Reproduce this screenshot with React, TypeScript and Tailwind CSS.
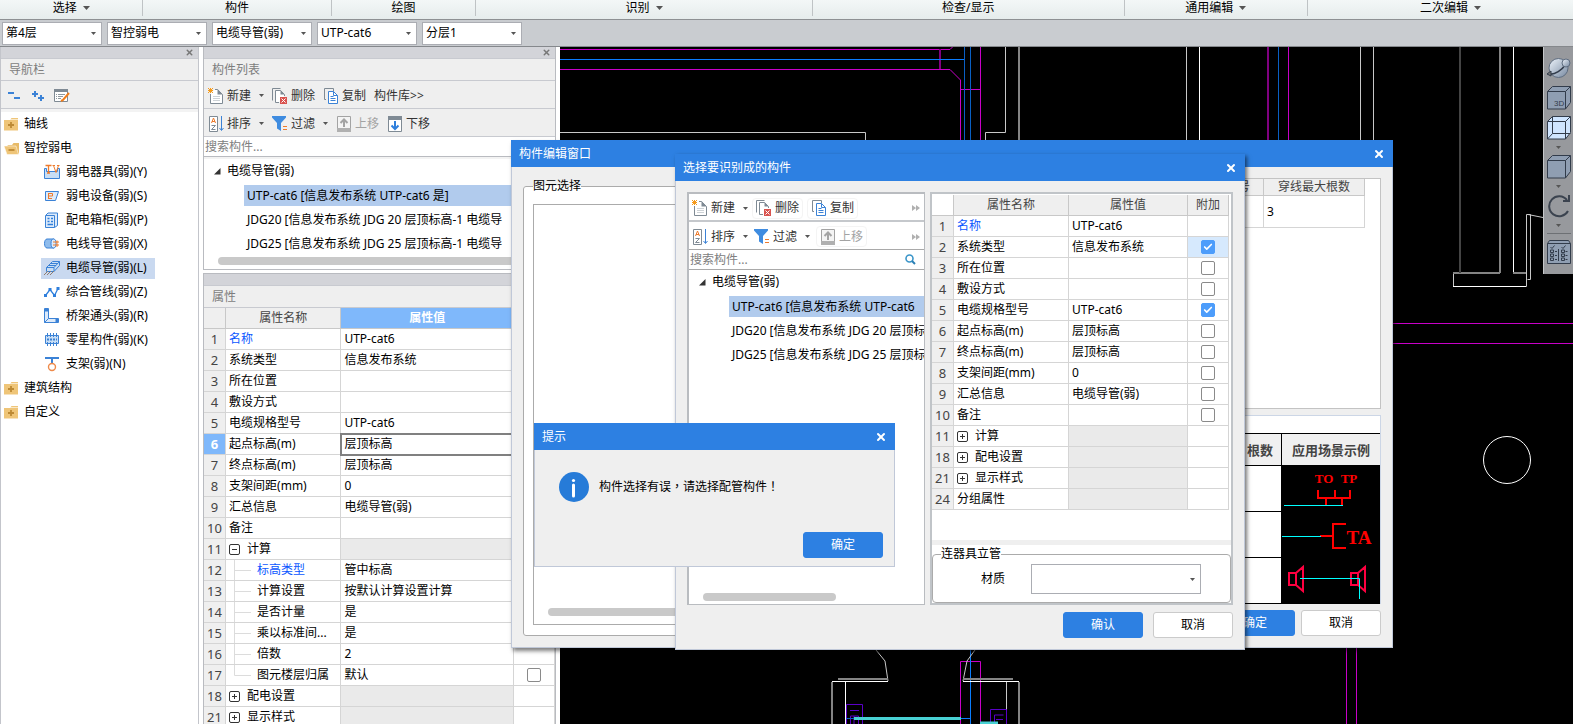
import type { ReactNode } from 'react';
import { Check, X } from 'lucide-react';
import { clsx } from 'clsx';

interface PropertyRow {
  no: number;
  name: string;
  value?: string;
  link?: boolean;
  group?: 'open' | 'closed';
  child?: boolean;
  last?: boolean;
  shaded?: boolean;
  checked?: boolean;
}

const ribbonGroups = [
  { label: '选择', menu: true, width: 'flex-[143]' },
  { label: '构件', menu: false, width: 'flex-[188]' },
  { label: '绘图', menu: false, width: 'flex-[144]' },
  { label: '识别', menu: true, width: 'flex-[337]' },
  { label: '检查/显示', menu: false, width: 'flex-[312]' },
  { label: '通用编辑', menu: true, width: 'flex-[183]' },
  { label: '二次编辑', menu: true, width: 'flex-[246] pl-5' },
];

const selectors = [
  { label: '楼层', value: '第4层' },
  { label: '专业', value: '智控弱电' },
  { label: '构件类型', value: '电缆导管(弱)' },
  { label: '构件', value: 'UTP-cat6' },
  { label: '分层', value: '分层1' },
];

const baseRows: PropertyRow[] = [
  { no: 1, name: '名称', value: 'UTP-cat6', link: true },
  { no: 2, name: '系统类型', value: '信息发布系统', checked: true },
  { no: 3, name: '所在位置', checked: false },
  { no: 4, name: '敷设方式', checked: false },
  { no: 5, name: '电缆规格型号', value: 'UTP-cat6', checked: true },
  { no: 6, name: '起点标高(m)', value: '层顶标高', checked: false },
  { no: 7, name: '终点标高(m)', value: '层顶标高', checked: false },
  { no: 8, name: '支架间距(mm)', value: '0', checked: false },
  { no: 9, name: '汇总信息', value: '电缆导管(弱)', checked: false },
  { no: 10, name: '备注', checked: false },
];

const panelRows: PropertyRow[] = [
  ...baseRows.map((row) => ({ ...row, checked: undefined })),
  { no: 11, name: '计算', group: 'open', shaded: true },
  { no: 12, name: '标高类型', value: '管中标高', link: true, child: true },
  { no: 13, name: '计算设置', value: '按默认计算设置计算', child: true },
  { no: 14, name: '是否计量', value: '是', child: true },
  { no: 15, name: '乘以标准间...', value: '是', child: true },
  { no: 16, name: '倍数', value: '2', child: true },
  { no: 17, name: '图元楼层归属', value: '默认', child: true, last: true, checked: false },
  { no: 18, name: '配电设置', group: 'closed', shaded: true },
  { no: 21, name: '显示样式', group: 'closed', shaded: true },
];

const dialogRows: PropertyRow[] = [
  ...baseRows,
  { no: 11, name: '计算', group: 'closed', shaded: true },
  { no: 18, name: '配电设置', group: 'closed', shaded: true },
  { no: 21, name: '显示样式', group: 'closed', shaded: true },
  { no: 24, name: '分组属性', shaded: true },
];

/* ---------- icons ---------- */

function Caret({ className = '' }: { className?: string }) {
  return (
    <svg width="5" height="3" viewBox="0 0 5 3" className={clsx('shrink-0', className)} aria-hidden="true">
      <path d="M0 0h5L2.500 3z" fill="#555" />
    </svg>
  );
}

function Icon({ children }: { children: ReactNode }) {
  return (
    <svg width="16" height="16" viewBox="0 0 16 16" fill="none" className="shrink-0" aria-hidden="true">
      {children}
    </svg>
  );
}

const NewIcon = () => (
  <Icon>
    <path d="M2.500 6v9.500h12V6.500l-5-5H7" stroke="#7f8a94" fill="#fff" />
    <path d="M9.500 1v5.500h5z" fill="#7f8a94" />
    <path d="M5 8.500h7M5 10.500h7M5 12.500h7" stroke="#cdd2d6" />
    <path d="M0 0l5 5M5 0L0 5M2.500 0v5M0 2.500h5" stroke="#f59a1b" />
  </Icon>
);

const DeleteIcon = () => (
  <Icon>
    <path d="M.5 12.500V.5h8" stroke="#7f8a94" />
    <path d="M7 14.500H3.500v-12h5l4 4V8" stroke="#7f8a94" fill="#fff" />
    <path d="M8.500 2v4.500h4z" fill="#7f8a94" />
    <rect x="8" y="9" width="7" height="7" fill="#d9534f" />
    <path d="M9.500 10.500l4 4M13.500 10.500l-4 4" stroke="#fff" />
  </Icon>
);

const CopyIcon = () => (
  <Icon>
    <path d="M3 11.500H1.500V.5h9V3" stroke="#7f8a94" />
    <path d="M5.500 3.500h5l4 4v8h-9z" stroke="#3b82d6" fill="#fff" />
    <path d="M10.500 3.500v4h4M7.500 8.500h3M7.500 10.500h5M7.500 12.500h5" stroke="#3b82d6" />
  </Icon>
);

const SortIcon = () => (
  <Icon>
    <path d="M1.500.5h8v15h-8z" stroke="#7f8a94" fill="#fff" />
    <path d="M3.500 7l2-5 2 5M4 5.500h3" stroke="#ee7a2b" />
    <path d="M3.500 9.500h4l-4 4h4" stroke="#7f8a94" />
    <path d="M13.500 0v14M11.500 12l2 2.500 2-2.500" stroke="#3b82d6" />
  </Icon>
);

const FilterIcon = () => (
  <Icon>
    <path d="M0 0h14v1.500L9 7v8l-4-2.500V7L0 1.500z" fill="#3f8ce0" />
    <path d="M11 10.500h4M11 13.500h4" stroke="#ee7a2b" />
  </Icon>
);

const UpIcon = () => (
  <Icon>
    <path d="M1.500.5v14h13V.5z" stroke="#a3a3a3" fill="#f4f4f4" />
    <path d="M1 12h14v4H1z" fill="#b0b0b0" />
    <path d="M8 11V4M4.500 7L8 3.500 11.500 7" stroke="#a3a3a3" strokeWidth="2" />
  </Icon>
);

const DownIcon = () => (
  <Icon>
    <path d="M1.500 1v14.500h13V1z" stroke="#7f8a94" fill="#fff" />
    <path d="M1 0h14v4H1z" fill="#7f8a94" />
    <path d="M8 5v8M4.500 9.500L8 13l3.500-3.500" stroke="#2f7fdc" strokeWidth="2" />
  </Icon>
);

const SearchIcon = () => (
  <svg width="11" height="11" viewBox="0 0 11 11" fill="none" className="shrink-0" aria-hidden="true">
    <circle cx="4.500" cy="4.500" r="3.500" stroke="#3a95c9" strokeWidth="1.600" />
    <path d="M7 7l3 3" stroke="#2b80b5" strokeWidth="2" />
  </svg>
);

const FolderClosed = () => (
  <Icon>
    <path d="M0 4h14v10.500H0z" fill="#efc578" />
    <path d="M7.500 2h6.500v2H6z" fill="#efc578" />
    <path d="M6 3.500h8" stroke="#fff" strokeWidth=".6" />
    <path d="M4 9h6M7 6v6" stroke="#bd8a35" strokeWidth="1.800" />
  </Icon>
);

const FolderOpen = () => (
  <Icon>
    <path d="M3 5h5l1.500-2H15v11" fill="#e8bb68" />
    <path d="M0 6h12l2.500 8.500H3z" fill="#efc578" stroke="#fff" strokeWidth=".5" />
    <path d="M4.500 10h6" stroke="#bd8a35" strokeWidth="1.800" />
  </Icon>
);

const FixtureIcon = () => (
  <Icon>
    <path d="M.5 4.500h2v3h11v-3h2v10H.5z" fill="#c8def5" stroke="#3b82d6" />
    <path d="M1.500 1.500h6M4.500 1.500v8M3 9h3" stroke="#ee7a2b" strokeWidth="1.300" />
    <path d="M8.500 1.500H11M13 1.500h2.500M9.500 1.500l2.500 7 2.500-7" stroke="#ee7a2b" />
  </Icon>
);

const DeviceIcon = () => (
  <Icon>
    <path d="M1.500 3.500h13l-3 9h-10z" fill="#dceafa" stroke="#3b82d6" />
    <path d="M4 5.500h4.500M4 8h4.500M4 10.500h4M4.500 5.500v5M8.500 5.500v2.500" stroke="#ee7a2b" />
  </Icon>
);

const CabinetIcon = () => (
  <Icon>
    <path d="M1.500 3.500h9v12h-9zM2 3l2-2h9.500v12.500l-3 2" fill="#dceafa" stroke="#3b82d6" />
    <path d="M3.500 6.500h2M7 6.500h2M3.500 9.500h2M7 9.500h2M3.500 12.500h5.500" stroke="#2f7fdc" strokeWidth="1.500" />
  </Icon>
);

const ConduitIcon = () => (
  <Icon>
    <path d="M3 3h7v9H3C1.500 12 .5 10 .5 7.500S1.500 3 3 3z" fill="#8fbcec" stroke="#3b82d6" />
    <ellipse cx="9.500" cy="7.500" rx="2.500" ry="4.500" fill="#dceafa" stroke="#3b82d6" />
    <path d="M9 6h6M9 9h6M13 4.500v3M13 7.500V11" stroke="#ee7a2b" />
  </Icon>
);

const CableIcon = () => (
  <Icon>
    <path d="M2.500 7.500l6-6h7v4l-5.500 6h-7.500z" fill="#c8def5" stroke="#3b82d6" />
    <path d="M2.500 7.500H10l5.500-6M10 7.500v4M4.500 5.500H12M6.500 3.500H14" stroke="#3b82d6" />
    <path d="M4 11l-4 4M7 11l-4 4M10 11l-4 4" stroke="#8f7d70" />
  </Icon>
);

const PipelineIcon = () => (
  <Icon>
    <path d="M1.500 11.500l4.500-6 4.500 6L14 4.500" stroke="#2f7fdc" strokeWidth="1.300" />
    <path d="M0 10h3v3H0zM4.500 4h3v3h-3zM9 10h3v3H9zM12.500 3h3v3h-3z" fill="#2f7fdc" />
  </Icon>
);

const BendIcon = () => (
  <Icon>
    <path d="M.5.5h4v10h10v4H.5z" fill="#dceafa" stroke="#3b82d6" />
    <path d="M1 1h3v2.500H1zM11.500 11H14v3h-2.500z" fill="#3b82d6" />
    <path d="M.5 14.500l4-4" stroke="#3b82d6" />
  </Icon>
);

const ChipIcon = () => (
  <Icon>
    <path d="M1.500 3.500h13v8h-13z" fill="#c8def5" stroke="#3b82d6" />
    <path d="M3.500 1v4M6.500 1v4M9.500 1v4M12.500 1v4M3.500 10v4M6.500 10v4M9.500 10v4M12.500 10v4" stroke="#3b82d6" />
    <path d="M3 7.500h10" stroke="#3b82d6" strokeWidth="2" strokeDasharray="2 1" />
  </Icon>
);

const BracketIcon = () => (
  <Icon>
    <path d="M1 2h14M8 2v5" stroke="#3b82d6" strokeWidth="2" />
    <circle cx="8" cy="11" r="3.500" stroke="#ee8a4a" strokeWidth="1.400" />
  </Icon>
);

const navItems = [
  { label: '弱电器具(弱)(Y)', icon: <FixtureIcon /> },
  { label: '弱电设备(弱)(S)', icon: <DeviceIcon /> },
  { label: '配电箱柜(弱)(P)', icon: <CabinetIcon /> },
  { label: '电线导管(弱)(X)', icon: <ConduitIcon /> },
  { label: '电缆导管(弱)(L)', icon: <CableIcon />, active: true },
  { label: '综合管线(弱)(Z)', icon: <PipelineIcon /> },
  { label: '桥架通头(弱)(R)', icon: <BendIcon /> },
  { label: '零星构件(弱)(K)', icon: <ChipIcon /> },
  { label: '支架(弱)(N)', icon: <BracketIcon /> },
];

/* ---------- shared pieces ---------- */

function Combo({ label, value, className }: { label: string; value: string; className: string }) {
  return (
    <span className={clsx('grid items-center border border-[#abadb3] bg-white', className)}>
      <select aria-label={label} defaultValue={value} className="col-start-1 row-start-1 h-full w-full appearance-none bg-transparent pl-[3px] outline-none">
        <option>{value}</option>
      </select>
      <Caret className="pointer-events-none col-start-1 row-start-1 mr-[5px] justify-self-end" />
    </span>
  );
}

interface ToolButtonProps {
  icon?: ReactNode;
  label: string;
  menu?: boolean;
  disabled?: boolean;
  framed?: boolean;
}

function ToolButton({ icon, label, menu, disabled, framed }: ToolButtonProps) {
  return (
    <button
      type="button"
      disabled={disabled}
      className={clsx(
        'flex h-[21px] shrink-0 items-center gap-[3px] whitespace-nowrap',
        disabled ? 'text-[#a3a3a3]' : 'text-[#333]',
        framed && 'rounded border border-[#f4f4f4] px-[3px]',
      )}
    >
      {icon}
      {label}
      {menu && <Caret className="ml-[5px]" />}
    </button>
  );
}

function CheckBox({ label, checked = false }: { label: string; checked?: boolean }) {
  return (
    <span className="grid h-5 place-items-center">
      <input
        type="checkbox"
        aria-label={label}
        defaultChecked={checked}
        className="peer col-start-1 row-start-1 size-[14px] appearance-none rounded-[2px] border border-[#8a8a8a] bg-white checked:border-[#4d9dfb] checked:bg-[#4d9dfb]"
      />
      <Check size={10} strokeWidth={4} className="pointer-events-none invisible col-start-1 row-start-1 text-white peer-checked:visible" />
    </span>
  );
}

function Expander({ open }: { open: boolean }) {
  return (
    <button type="button" aria-label={open ? '折叠' : '展开'} className="mr-[7px] size-[11px] shrink-0">
      <svg width="11" height="11" viewBox="0 0 11 11" fill="none" stroke="#333">
        <rect x=".5" y=".5" width="10" height="10" rx="1.500" />
        <path d={open ? 'M3 5.500h5' : 'M3 5.500h5M5.500 3v5'} />
      </svg>
    </button>
  );
}

interface PropertyTableProps {
  rows: PropertyRow[];
  valueCol: string;
  extra?: string;
  selected?: number;
  highlight?: number;
}

function PropertyTable({ rows, valueCol, extra, selected, highlight }: PropertyTableProps) {
  const head = 'h-[21px] border-r border-b border-[#c8c8c8] p-0 font-normal';
  const cell = 'h-[21px] border-r border-b border-[#d5d5d5] p-0';
  return (
    <table className="table-fixed border-separate border-spacing-0 whitespace-nowrap text-black">
      <colgroup>
        <col className="w-[22px]" />
        <col className="w-[115px]" />
        <col className={valueCol} />
        <col className="w-[41px]" />
      </colgroup>
      <thead>
        <tr className="text-[#444]">
          <th className={clsx(head, selected ? 'bg-[#efefef]' : 'bg-white')} />
          <th className={clsx(head, 'bg-[#efefef]')}>属性名称</th>
          <th className={clsx(head, selected ? 'bg-[#7fb8fb] font-semibold text-white' : 'bg-[#efefef]')}>属性值</th>
          <th className={clsx(head, 'bg-[#efefef]')}>{extra}</th>
        </tr>
      </thead>
      <tbody>
        {rows.map((row) => (
          <tr key={row.no}>
            <td
              className={clsx(
                cell,
                'border-[#c8c8c8] text-center text-[13px]',
                row.no === selected ? 'bg-[#7fb8fb] font-bold text-white' : 'bg-[#efefef] text-[#444]',
              )}
            >
              {row.no}
            </td>
            <td className={clsx(cell, 'bg-white')}>
              <div className={clsx('flex h-5 items-center pl-[3px]', row.link && 'text-[#0b57ff]')}>
                {row.group && <Expander open={row.group === 'open'} />}
                {row.child && (
                  <svg width="28" height="20" viewBox="0 0 28 20" fill="none" stroke="#dcdcdc" className="shrink-0" aria-hidden="true">
                    <path d={row.last ? 'M5.500 0v10.500H22' : 'M5.500 0v20M5.500 10.500H22'} />
                  </svg>
                )}
                {row.name}
              </div>
            </td>
            <td
              className={clsx(
                cell,
                'pl-[3px]',
                row.shaded ? 'bg-[#eaeaea]' : 'bg-white',
                row.no === selected && 'outline-2 -outline-offset-1 outline-[#808080]',
              )}
            >
              {row.value}
            </td>
            <td className={clsx(cell, row.no === highlight ? 'bg-[#d6e9fd]' : 'bg-white')}>
              {row.checked !== undefined && <CheckBox label={row.name} checked={row.checked} />}
            </td>
          </tr>
        ))}
      </tbody>
    </table>
  );
}

function ComponentTree({ items }: { items: string[] }) {
  return (
    <ul className="text-black">
      <li>
        <div className="flex h-6 items-center">
          <svg width="7" height="7" viewBox="0 0 7 7" className="mr-[6px] ml-[10px] shrink-0" aria-hidden="true">
            <path d="M6.500 0v6.500H0z" fill="#333" />
          </svg>
          电缆导管(弱)
        </div>
        <ul>
          {items.map((item, i) => (
            <li key={item} className="flex h-6 items-center pl-10">
              <span className={clsx('h-[21px] flex-1 overflow-hidden pl-[3px] leading-[21px] whitespace-nowrap', i === 0 && 'bg-[#b1cbed]')}>
                {item}
              </span>
            </li>
          ))}
        </ul>
      </li>
    </ul>
  );
}

function DockGrip({ closable }: { closable?: boolean }) {
  return (
    <div className="flex h-[11px] shrink-0 items-center justify-end bg-[#d3d4d9] pr-1 text-[#777]">
      {closable && (
        <button type="button" aria-label="关闭">
          <X size={9} strokeWidth={4} />
        </button>
      )}
    </div>
  );
}

function DockTitle({ children }: { children: ReactNode }) {
  return <h2 className="h-[23px] shrink-0 border-y border-[#c8cad0] bg-[#efefef] pl-2 leading-[21px] text-[#7d7d7d]">{children}</h2>;
}

function TitleBar({ children }: { children: ReactNode }) {
  return (
    <div className="flex h-[27px] shrink-0 items-center justify-between bg-[#2d80e2] px-2 text-white">
      <h2>{children}</h2>
      <button type="button" aria-label="关闭">
        <X size={12} strokeWidth={4} />
      </button>
    </div>
  );
}

function PushButton({ primary, children }: { primary?: boolean; children: ReactNode }) {
  return (
    <button
      type="button"
      className={clsx(
        'h-[26px] w-20 rounded-[3px] border',
        primary ? 'border-[#2d80e2] bg-[#2d80e2] text-white' : 'border-[#cbcbcb] bg-white text-black',
      )}
    >
      {children}
    </button>
  );
}

/* ---------- main window ---------- */

function Ribbon() {
  return (
    <header className="flex h-5 shrink-0 border-b border-[#8d9093] bg-linear-to-b from-[#f3f7f7] to-[#e6ecec]">
      {ribbonGroups.map((group) => (
        <div key={group.label} className={clsx('flex h-4 justify-center border-r border-[#bfc3c5] last:border-r-0', group.width)}>
          <button type="button" className="flex h-4 items-center gap-[6px] text-black">
            {group.label}
            {group.menu && (
              <svg width="7" height="4" viewBox="0 0 7 4" aria-hidden="true">
                <path d="M0 0h7L3.500 4z" fill="#555" />
              </svg>
            )}
          </button>
        </div>
      ))}
    </header>
  );
}

function NavigationPanel() {
  return (
    <nav className="flex w-[199px] shrink-0 flex-col border-x border-[#c3c5cb] bg-white">
      <DockGrip closable />
      <DockTitle>导航栏</DockTitle>
      <div className="flex h-7 shrink-0 items-center gap-3 border-b border-[#c8cad0] bg-[#efefef] pt-[2px] pl-[7px]">
        <button type="button" aria-label="全部折叠">
          <svg width="12" height="12" viewBox="0 0 12 12" stroke="#3b82d6" strokeWidth="2">
            <path d="M0 3h6M6 8h6" />
          </svg>
        </button>
        <button type="button" aria-label="全部展开">
          <svg width="12" height="12" viewBox="0 0 12 12" stroke="#3b82d6" strokeWidth="2">
            <path d="M0 4h6M3 1v6M6 8h6M9 5v6" />
          </svg>
        </button>
        <button type="button" aria-label="编辑" className="-ml-[2px]">
          <Icon>
            <path d="M.5 2.500h13v11H.5z" fill="#fff" stroke="#7f8a94" />
            <path d="M0 1h14v3H0z" fill="#7f8a94" />
            <path d="M2 6.500h1M4 6.500h7M2 8.500h1M4 8.500h5M2 10.500h1M4 10.500h3" stroke="#8e989f" />
            <path d="M15 5l-6 7-2 1" stroke="#f07d1a" strokeWidth="2" />
          </Icon>
        </button>
      </div>
      <ul className="border-t-3 border-[#f3f3f3] text-black">
        <li className="flex h-6 items-center gap-1 pl-[3px]"><FolderClosed />轴线</li>
        <li className="flex h-6 items-center gap-1 pl-[3px]"><FolderOpen />智控弱电</li>
        {navItems.map((item) => (
          <li key={item.label} className="flex h-6 items-center pl-10">
            <a href="#" className={clsx('flex h-[21px] items-center gap-[6px] pr-[8px] pl-[3px]', item.active && 'bg-[#c9d9f0]')}>
              {item.icon}
              {item.label}
            </a>
          </li>
        ))}
        <li className="flex h-6 items-center gap-1 pl-[3px]"><FolderClosed />建筑结构</li>
        <li className="flex h-6 items-center gap-1 pl-[3px]"><FolderClosed />自定义</li>
      </ul>
    </nav>
  );
}

function ComponentPanel() {
  return (
    <aside className="ml-1 flex w-[353px] shrink-0 flex-col">
      <section className="flex h-[223px] shrink-0 flex-col border-x border-b border-[#b9bbc0] bg-white">
        <DockGrip closable />
        <DockTitle>构件列表</DockTitle>
        <div className="flex h-7 shrink-0 items-center gap-2 border-b border-[#c8cad0] bg-[#efefef] pt-[2px] pl-1">
          <ToolButton icon={<NewIcon />} label="新建" menu />
          <ToolButton icon={<DeleteIcon />} label="删除" />
          <ToolButton icon={<CopyIcon />} label="复制" />
          <ToolButton label="构件库>>" />
        </div>
        <div className="flex h-7 shrink-0 items-center gap-2 border-b border-[#c8cad0] bg-[#efefef] pt-[2px] pl-1">
          <ToolButton icon={<SortIcon />} label="排序" menu />
          <ToolButton icon={<FilterIcon />} label="过滤" menu />
          <ToolButton icon={<UpIcon />} label="上移" disabled />
          <ToolButton icon={<DownIcon />} label="下移" />
        </div>
        <input
          type="search"
          aria-label="搜索构件"
          placeholder="搜索构件..."
          className="h-5 shrink-0 border-b border-[#b9bbc0] px-px outline-none placeholder:text-[#808080]"
        />
        <div className="flex-1 overflow-hidden border-t-2 border-[#f3f3f3]">
          <ComponentTree
            items={['UTP-cat6 [信息发布系统 UTP-cat6 是]', 'JDG20 [信息发布系统 JDG 20 层顶标高-1 电缆导', 'JDG25 [信息发布系统 JDG 25 层顶标高-1 电缆导']}
          />
          <div className="mt-[2px] ml-[14px] h-2 w-[310px] rounded-full bg-[#c9c9c9]" />
        </div>
      </section>
      <section className="mt-[3px] flex min-h-0 flex-1 flex-col overflow-hidden border-x border-t border-[#b9bbc0] bg-white">
        <DockGrip />
        <DockTitle>属性</DockTitle>
        <PropertyTable rows={panelRows} valueCol="w-[172px]" selected={6} />
      </section>
    </aside>
  );
}

function Cube({ face = '#8f9eb2', children }: { face?: string; children?: ReactNode }) {
  return (
    <svg width="24" height="24" viewBox="0 0 24 24" fill={face} stroke="#323c4b" strokeLinejoin="round">
      <path d="M.5 5.500l5-5h18v16l-5 6.500H.5z" />
      <path d="M.5 5.500h18l5-5M18.500 5.500V23" fill="none" />
      {children}
    </svg>
  );
}

function ViewToolbar() {
  return (
    <div className="absolute top-0 right-0 flex w-[30px] flex-col items-center gap-[6px] border-l border-[#c6c8ca] bg-[#97999d] pt-[9px] pb-[10px]">
      <button type="button" aria-label="动态观察">
        <svg width="24" height="24" viewBox="0 0 24 24">
          <defs>
            <linearGradient id="ball" x1="0" y1="0" x2="1" y2="1">
              <stop offset="0" stopColor="#eef4fb" />
              <stop offset="1" stopColor="#7688a0" />
            </linearGradient>
          </defs>
          <circle cx="11.500" cy="12" r="9.500" fill="url(#ball)" stroke="#5f6d80" />
          <path d="M2 18c6 1 13-4 17-10" fill="none" stroke="#323c4b" strokeWidth="1.500" />
          <circle cx="19" cy="7" r="4" fill="url(#ball)" stroke="#5f6d80" />
          <path d="M0 18l4-3v5z" fill="#777" stroke="#323c4b" />
        </svg>
      </button>
      <button type="button" aria-label="三维">
        <Cube>
          <text x="7" y="20" fontSize="8" fontFamily="Liberation Sans" fill="#323c4b" stroke="none">3D</text>
        </Cube>
      </button>
      <button type="button" aria-label="线框">
        <Cube face="#cfe5ff">
          <path d="M5.500.5v17h18M.5 23l5-5.500" fill="none" />
        </Cube>
      </button>
      <Caret />
      <button type="button" aria-label="实体">
        <Cube />
      </button>
      <Caret />
      <button type="button" aria-label="旋转">
        <svg width="24" height="24" viewBox="0 0 24 24" fill="none" stroke="#3b434f" strokeWidth="2">
          <path d="M21 17a10 10 0 1 1-1-11" />
          <path d="M22 1v6h-6" />
        </svg>
      </button>
      <Caret />
      <hr className="w-6 border-[#6d7074]" />
      <button type="button" aria-label="显示设置">
        <svg width="24" height="24" viewBox="0 0 24 24" fill="#8f9eb2" stroke="#323c4b">
          <path d="M.5 3.500l2-3h19l2 3v20H.5zM.5 3.500h23" />
          <path d="M11.500 9v12M3.500 7l1.500 1.500L7.500 5.500M14.500 7l1.500 1.500 2.500-3" fill="none" />
          <path d="M3.500 10h3v2.500h-3zM3.500 14h3v2.500h-3zM3.500 18h3v2.500h-3zM14.500 10h3v2.500h-3zM14.500 14h3v2.500h-3zM14.500 18h3v2.500h-3zM8 11.500h2M8 15.500h2M8 19.500h2M18.500 11.500h2M18.500 15.500h2M18.500 19.500h2" fill="none" />
        </svg>
      </button>
    </div>
  );
}

function DrawingCanvas() {
  return (
    <main className="relative ml-1 min-w-0 flex-1 overflow-hidden bg-black">
      <svg className="block h-full w-full" fill="none" aria-label="图纸">
        <g transform="translate(-560 -47)">
          <g stroke="#c800c8">
            <path d="M560 49.500H950l3-3M560 69.500H950L960.500 80V140M960 89.500h20M980.500 47v93M1288.500 47v93" />
            <path d="M1393 323.500h180M1393 343.500h180M1346.500 648v76M1356.500 648v76" />
            <path d="M960.500 724v-62.500h20V724" />
            <path d="M940 49v20M1268 47v93" stroke="#800080" strokeWidth="2" />
          </g>
          <g stroke="#0a7cff">
            <path d="M560 59.500h404M970.500 648v76M961 718.500h10" />
            <path d="M964.500 47v93M970.500 47v93M1278.500 47v93" stroke="#0a5fc4" />
          </g>
          <g stroke="#c8c8c8">
            <path d="M560 132.500h305.500v7.500M1005.500 47v85.500H985.500V140M1186.500 47v93M1360.500 47v93M1373.500 47v93" />
            <path d="M1453.500 273v13.500h73V214.500h4v65h-3M1528 214.500l15 3" />
            <path d="M876 650l9 11 3 20M975 650l-8 11-4 20" />
            <path d="M1006.500 682v42" />
          </g>
          <g stroke="#ffffff">
            <path d="M1199.500 47v93M1513.500 47v226M1453 286.500h73M832 681.500h56M845.500 681v43M963 681.500h56" />
            <circle cx="1507" cy="460" r="23.500" />
          </g>
          <g stroke="#848484" strokeWidth="2">
            <path d="M1019 47v93M1500 47v226M1453 273h47M1513 273h13M838 679h50M832 682v42M963 679h50M1019 682v42" />
            <path d="M1460 47v226" stroke="#444" />
          </g>
          <g stroke="#5a00c8">
            <path d="M846.500 724v-19.500h16V724M850 710.500h9M850.500 724v-8h8v8M854 716v8" />
            <path d="M990.500 724v-14.500h16V724M994.500 722v-7h9M996 719.500h7" />
          </g>
          <path d="M846 718.500h8" stroke="#0a5fc4" />
          <path d="M854 718.500h107M980 723h18" stroke="#48d1d4" strokeWidth="3" />
        </g>
      </svg>
      <ViewToolbar />
    </main>
  );
}

/* ---------- dialogs ---------- */

function ScenarioDrawing() {
  return (
    <svg width="99" height="138" viewBox="0 0 99 138" fill="none" className="block bg-black" aria-label="应用场景">
      <g fill="#f00" fontFamily="Liberation Serif" fontWeight="bold" textAnchor="middle">
        <text x="43" y="17" fontSize="13">TO</text>
        <text x="68" y="17" fontSize="13">TP</text>
        <text x="78" y="78" fontSize="19">TA</text>
      </g>
      <path d="M37 24v8h32v-8M54 24v8M45 32v7M61 32v7M39 70h13M65 58H52v24h13" stroke="#f00" strokeWidth="2" />
      <path d="M8 107h7v12H8zM15 107l7-6v24l-7-6M70 107h7v12h-7zM77 107l7-6v24l-7-6" stroke="#ff0040" strokeWidth="2" />
      <path d="M3 39.500h59M1 70.500h39M19 112.500h59.500V133" stroke="#0ff" />
    </svg>
  );
}

function EditWindow() {
  return (
    <section role="dialog" aria-label="构件编辑窗口" className="absolute top-[140px] left-[511px] flex h-[508px] w-[882px] flex-col bg-[#efefef] shadow-[2px_3px_4px_rgba(0,0,0,0.5)]">
      <TitleBar>构件编辑窗口</TitleBar>
      <div className="flex min-h-0 flex-1 gap-3 border border-t-0 border-[#c0c8d8] px-[11px] pt-[11px] pb-[11px]">
        <fieldset className="w-[360px] rounded-[3px] border border-[#ababab] bg-white px-[9px] pb-[9px]">
          <legend className="h-4 bg-linear-to-b from-[#efefef] from-50% to-white to-50% leading-4 text-black">图元选择</legend>
          <div className="mt-[10px] flex h-[421px] items-end border border-[#ababab] bg-white px-[14px] pb-2">
            <div className="h-2 w-full rounded-full bg-[#c9c9c9]" />
          </div>
        </fieldset>
        <div className="flex flex-1 flex-col">
          <div className="flex h-[231px] justify-end border border-[#c3c3c3] bg-white pr-[15px]">
            <table className="h-[49px] w-full border-separate border-spacing-0">
              <thead>
                <tr className="bg-[#efefef] text-[#444]">
                  <th className="h-[17px] border-r border-b border-[#c8c8c8] p-0 pr-[13px] text-right font-normal">号</th>
                  <th className="h-[17px] w-[101px] border-r border-b border-[#c8c8c8] p-0 font-normal">穿线最大根数</th>
                </tr>
              </thead>
              <tbody>
                <tr className="text-black">
                  <td className="h-[31px] border-r border-b border-[#d5d5d5] p-0" />
                  <td className="h-[31px] border-r border-b border-[#d5d5d5] p-0 pl-[3px]">3</td>
                </tr>
              </tbody>
            </table>
          </div>
          <div className="mt-[6px] border border-b-0 border-[#ccd6e6] bg-white pt-[17px]">
            <table className="w-full border-separate border-spacing-0 border-t border-black text-[13px] text-[#444]">
              <thead>
                <tr className="bg-[#f0f0f0]">
                  <th className="h-8 border-b border-black p-0 pr-2 text-right font-bold">根数</th>
                  <th className="h-8 w-[99px] border-b border-l border-black p-0 text-center font-bold">应用场景示例</th>
                </tr>
              </thead>
              <tbody>
                {[0, 1, 2].map((i) => (
                  <tr key={i}>
                    <td className="h-[46px] border-b border-black p-0" />
                    {i === 0 && (
                      <td rowSpan={3} className="p-0">
                        <ScenarioDrawing />
                      </td>
                    )}
                  </tr>
                ))}
              </tbody>
            </table>
          </div>
          <div className="mt-[6px] flex justify-end gap-[6px]">
            <PushButton primary>确定</PushButton>
            <PushButton>取消</PushButton>
          </div>
        </div>
      </div>
    </section>
  );
}

function Overflow() {
  return (
    <button type="button" aria-label="更多" className="mr-1 ml-auto">
      <svg width="8" height="6" viewBox="0 0 8 6" fill="#b0b0b0">
        <path d="M0 0l4 3-4 3zM4 0l4 3-4 3z" />
      </svg>
    </button>
  );
}

function PickerWindow() {
  return (
    <section role="dialog" aria-label="选择要识别成的构件" className="absolute top-[154px] left-[675px] flex h-[496px] w-[570px] flex-col bg-[#efefef] shadow-[2px_2px_4px_rgba(0,0,0,0.55)]">
      <TitleBar>选择要识别成的构件</TitleBar>
      <div className="flex min-h-0 flex-1 flex-col border border-t-0 border-[#c0c8d8] px-[11px] py-[11px]">
        <div className="flex min-h-0 flex-1 gap-[5px]">
          <div className="flex w-[238px] flex-col border-2 border-r border-b border-[#b9bcc0] bg-white">
            <div className="flex h-7 shrink-0 items-center gap-1 border-b-2 border-[#c5c8cc] pt-[2px] pl-[3px]">
              <ToolButton icon={<NewIcon />} label="新建" menu />
              <ToolButton icon={<DeleteIcon />} label="删除" framed />
              <ToolButton icon={<CopyIcon />} label="复制" framed />
              <Overflow />
            </div>
            <div className="flex h-[27px] shrink-0 items-center gap-[6px] pt-[2px] pl-[3px]">
              <ToolButton icon={<SortIcon />} label="排序" menu />
              <ToolButton icon={<FilterIcon />} label="过滤" menu />
              <ToolButton icon={<UpIcon />} label="上移" disabled framed />
              <Overflow />
            </div>
            <div className="flex h-[21px] shrink-0 items-center border-y border-[#a9a9a9] pr-2 pl-px">
              <input type="search" aria-label="搜索构件" placeholder="搜索构件..." className="min-w-0 flex-1 outline-none placeholder:text-[#808080]" />
              <SearchIcon />
            </div>
            <div className="flex min-h-0 flex-1 flex-col justify-between overflow-hidden pb-[3px]">
              <ComponentTree
                items={['UTP-cat6 [信息发布系统 UTP-cat6', 'JDG20 [信息发布系统 JDG 20 层顶标', 'JDG25 [信息发布系统 JDG 25 层顶标']}
              />
              <div className="ml-[14px] h-2 w-[133px] rounded-full bg-[#c9c9c9]" />
            </div>
          </div>
          <div className="flex flex-1 flex-col border-2 border-[#c0c4c8] bg-white">
            <div className="h-[346px] shrink-0 pt-px">
              <PropertyTable rows={dialogRows} valueCol="w-[119px]" extra="附加" highlight={2} />
            </div>
            <div className="h-[5px] shrink-0 bg-[#efefef]" />
            <fieldset className="flex-1 rounded border border-[#ababab] px-2">
              <legend className="bg-white leading-[18px] text-black">连器具立管</legend>
              <div className="flex items-center justify-end gap-[26px] pt-px pr-[21px] text-black">
                <span>材质</span>
                <Combo label="材质" value="" className="h-[30px] w-[170px]" />
              </div>
            </fieldset>
          </div>
        </div>
        <div className="mt-[7px] flex justify-end gap-[10px]">
          <PushButton primary>确认</PushButton>
          <PushButton>取消</PushButton>
        </div>
      </div>
    </section>
  );
}

function MessageBox() {
  return (
    <section role="alertdialog" aria-label="提示" className="absolute top-[423px] left-[534px] flex h-[144px] w-[361px] flex-col bg-[#efefef]">
      <TitleBar>提示</TitleBar>
      <div className="flex flex-1 flex-col justify-between border border-t-0 border-[#c0c8d8] pt-[22px] pr-[11px] pb-2 pl-6">
        <div className="flex items-center gap-[10px] text-black">
          <svg width="30" height="30" viewBox="0 0 30 30" aria-hidden="true">
            <circle cx="15" cy="15" r="15" fill="#267bd8" />
            <circle cx="14.500" cy="8.500" r="1.600" fill="#fff" />
            <path d="M14.500 13v11" stroke="#fff" strokeWidth="3" strokeLinecap="round" />
          </svg>
          <p className="font-['Noto_Sans','Noto_Sans_CJK_TC',sans-serif]">构件选择有误，请选择配管构件！</p>
        </div>
        <div className="flex justify-end">
          <PushButton primary>确定</PushButton>
        </div>
      </div>
    </section>
  );
}

export default function App() {
  return (
    <div className="relative flex h-screen flex-col overflow-hidden bg-white font-['Noto_Sans','Noto_Sans_CJK_SC',sans-serif] text-[12px] leading-4">
      <Ribbon />
      <div className="flex h-[27px] shrink-0 items-center gap-1 border-b border-[#85888c] bg-[#c9ccd0] pl-[2px]">
        {selectors.map((s) => (
          <Combo key={s.label} label={s.label} value={s.value} className="mr-px h-[23px] w-[100px]" />
        ))}
      </div>
      <div className="flex min-h-0 flex-1">
        <NavigationPanel />
        <ComponentPanel />
        <DrawingCanvas />
      </div>
      <EditWindow />
      <PickerWindow />
      <MessageBox />
    </div>
  );
}
